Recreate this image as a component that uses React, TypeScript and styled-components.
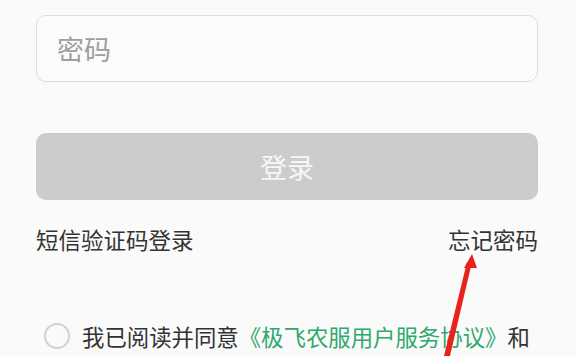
import React from "react";
import styled, { createGlobalStyle } from "styled-components";

const GlobalStyle = createGlobalStyle`
  html, body {
    margin: 0;
    padding: 0;
    background: #fafafa;
    font-family: "Noto Sans CJK SC", "Noto Sans", sans-serif;
  }
`;

const Page = styled.div`
  position: relative;
  width: 576px;
  height: 356px;
  overflow: hidden;
  padding: 15px 38px 0 36px;
  box-sizing: border-box;
`;

const PasswordField = styled.div`
  height: 67px;
  box-sizing: border-box;
  border: 1.5px solid #dddddd;
  border-radius: 10px;
  background: #fbfbfb;
  display: flex;
  align-items: center;
  padding-left: 20px;
  font-size: 27px;
  color: #9e9e9e;
`;

const LoginButton = styled.div`
  margin-top: 51px;
  height: 67px;
  border-radius: 10px;
  background: #cccccc;
  color: #f7f7f7;
  font-size: 27px;
  display: flex;
  align-items: center;
  justify-content: center;
`;

const LinksRow = styled.div`
  margin-top: 24px;
  display: flex;
  justify-content: space-between;
  font-size: 22.5px;
  line-height: 30px;
  color: #333333;
`;

const AgreementRow = styled.div`
  margin-top: 67px;
  display: flex;
  align-items: center;
  gap: 12px;
  padding-left: 8px;
  font-size: 22.4px;
  line-height: 30px;
  color: #333333;
  white-space: nowrap;
`;

const Radio = styled.span`
  width: 26px;
  height: 26px;
  box-sizing: border-box;
  border: 2px solid #d2d2d2;
  border-radius: 50%;
  flex-shrink: 0;
`;

const Link = styled.span`
  color: #2fa86e;
`;

const Annotation = styled.svg`
  position: absolute;
  left: 0;
  top: 0;
  pointer-events: none;
`;

export default function App() {
  return (
    <>
      <GlobalStyle />
      <Page>
        <PasswordField>密码</PasswordField>
        <LoginButton>登录</LoginButton>
        <LinksRow>
          <span>短信验证码登录</span>
          <span>忘记密码</span>
        </LinksRow>
        <AgreementRow>
          <Radio />
          <span>
            我已阅读并同意<Link>《极飞农服用户服务协议》</Link>和
          </span>
        </AgreementRow>
        <Annotation width="576" height="356" viewBox="0 0 576 356">
          <polygon points="443,360 449,360 472,262 467,262" fill="#e8231e" />
          <polygon points="472,254 464,268 477,268" fill="#e8231e" />
        </Annotation>
      </Page>
    </>
  );
}
